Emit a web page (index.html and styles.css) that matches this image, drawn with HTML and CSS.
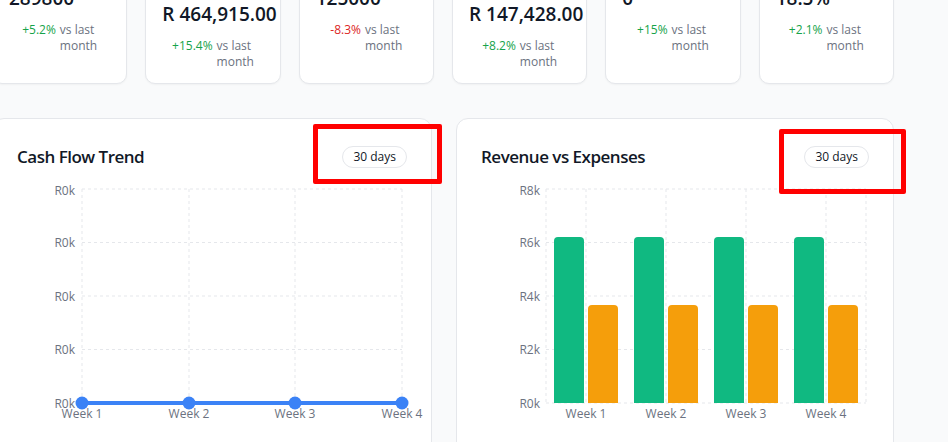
FILE: index.html
```html
<!DOCTYPE html>
<html lang="en">
<head>
<meta charset="utf-8">
<title>Dashboard</title>
<link rel="stylesheet" href="styles.css">
</head>
<body>
<main class="page">
  <section class="kpi-grid">
    <div class="kpi-card">
      <div class="kpi-label">Total Units</div>
      <div class="kpi-value">289800</div>
      <div class="kpi-delta"><span class="delta up">+5.2%</span><span class="delta-note"><span class="nw">vs last</span> month</span></div>
    </div>
    <div class="kpi-card">
      <div class="kpi-label">Total Revenue This Period</div>
      <div class="kpi-value">R 464,915.00</div>
      <div class="kpi-delta"><span class="delta up">+15.4%</span><span class="delta-note"><span class="nw">vs last</span> month</span></div>
    </div>
    <div class="kpi-card">
      <div class="kpi-label">Transactions</div>
      <div class="kpi-value">125000</div>
      <div class="kpi-delta"><span class="delta down">-8.3%</span><span class="delta-note"><span class="nw">vs last</span> month</span></div>
    </div>
    <div class="kpi-card">
      <div class="kpi-label">Total Expenses This Period</div>
      <div class="kpi-value">R 147,428.00</div>
      <div class="kpi-delta"><span class="delta up">+8.2%</span><span class="delta-note"><span class="nw">vs last</span> month</span></div>
    </div>
    <div class="kpi-card">
      <div class="kpi-label">Overdue</div>
      <div class="kpi-value">0</div>
      <div class="kpi-delta"><span class="delta up">+15%</span><span class="delta-note"><span class="nw">vs last</span> month</span></div>
    </div>
    <div class="kpi-card">
      <div class="kpi-label">Margin</div>
      <div class="kpi-value">18.5%</div>
      <div class="kpi-delta"><span class="delta up">+2.1%</span><span class="delta-note"><span class="nw">vs last</span> month</span></div>
    </div>
  </section>

  <section class="chart-grid">
    <div class="chart-card">
      <div class="chart-head">
        <h3 class="chart-title">Cash Flow Trend</h3>
        <span class="badge">30 days</span>
      </div>
      <svg class="chart" width="389" height="260">
        <g class="grid">
          <line x1="65" y1="3" x2="385" y2="3"/>
          <line x1="65" y1="56.5" x2="385" y2="56.5"/>
          <line x1="65" y1="110" x2="385" y2="110"/>
          <line x1="65" y1="163.5" x2="385" y2="163.5"/>
          <line x1="65" y1="217" x2="385" y2="217"/>
          <line x1="65" y1="3" x2="65" y2="217"/>
          <line x1="172" y1="3" x2="172" y2="217"/>
          <line x1="278" y1="3" x2="278" y2="217"/>
          <line x1="385" y1="3" x2="385" y2="217"/>
        </g>
        <g class="axis-y">
          <text x="58" y="9">R0k</text>
          <text x="58" y="61">R0k</text>
          <text x="58" y="114.5">R0k</text>
          <text x="58" y="168">R0k</text>
          <text x="58" y="221.5">R0k</text>
        </g>
        <g class="axis-x">
          <text x="65" y="232">Week 1</text>
          <text x="172" y="232">Week 2</text>
          <text x="278" y="232">Week 3</text>
          <text x="385" y="232">Week 4</text>
        </g>
        <line class="trend" x1="65" y1="217" x2="385" y2="217"/>
        <g class="dots">
          <circle cx="65" cy="217" r="6.5"/>
          <circle cx="172" cy="217" r="6.5"/>
          <circle cx="278" cy="217" r="6.5"/>
          <circle cx="385" cy="217" r="6.5"/>
        </g>
      </svg>
    </div>

    <div class="chart-card">
      <div class="chart-head">
        <h3 class="chart-title">Revenue vs Expenses</h3>
        <span class="badge">30 days</span>
      </div>
      <svg class="chart" width="389" height="260">
        <g class="grid">
          <line x1="65" y1="3" x2="385" y2="3"/>
          <line x1="65" y1="56.5" x2="385" y2="56.5"/>
          <line x1="65" y1="110" x2="385" y2="110"/>
          <line x1="65" y1="163.5" x2="385" y2="163.5"/>
          <line x1="65" y1="217" x2="385" y2="217"/>
          <line x1="65" y1="3" x2="65" y2="217"/>
          <line x1="105" y1="3" x2="105" y2="217"/>
          <line x1="185" y1="3" x2="185" y2="217"/>
          <line x1="265" y1="3" x2="265" y2="217"/>
          <line x1="345" y1="3" x2="345" y2="217"/>
          <line x1="385" y1="3" x2="385" y2="217"/>
        </g>
        <g class="axis-y">
          <text x="59" y="9">R8k</text>
          <text x="59" y="61">R6k</text>
          <text x="59" y="114.5">R4k</text>
          <text x="59" y="168">R2k</text>
          <text x="59" y="221.5">R0k</text>
        </g>
        <g class="bars-rev">
          <path d="M73 217V55a4 4 0 0 1 4-4h22a4 4 0 0 1 4 4V217Z"/>
          <path d="M153 217V55a4 4 0 0 1 4-4h22a4 4 0 0 1 4 4V217Z"/>
          <path d="M233 217V55a4 4 0 0 1 4-4h22a4 4 0 0 1 4 4V217Z"/>
          <path d="M313 217V55a4 4 0 0 1 4-4h22a4 4 0 0 1 4 4V217Z"/>
        </g>
        <g class="bars-exp">
          <path d="M107 217V123a4 4 0 0 1 4-4h22a4 4 0 0 1 4 4V217Z"/>
          <path d="M187 217V123a4 4 0 0 1 4-4h22a4 4 0 0 1 4 4V217Z"/>
          <path d="M267 217V123a4 4 0 0 1 4-4h22a4 4 0 0 1 4 4V217Z"/>
          <path d="M347 217V123a4 4 0 0 1 4-4h22a4 4 0 0 1 4 4V217Z"/>
        </g>
        <g class="axis-x">
          <text x="105" y="232">Week 1</text>
          <text x="185" y="232">Week 2</text>
          <text x="265" y="232">Week 3</text>
          <text x="345" y="232">Week 4</text>
        </g>
      </svg>
    </div>
  </section>
</main>

<div class="highlight highlight-left"></div>
<div class="highlight highlight-right"></div>
</body>
</html>
```

FILE: styles.css
```css
* { box-sizing: border-box; }

html, body {
  margin: 0;
  padding: 0;
  background: #f9fafb;
  font-family: "Open Sans", "Noto Sans", sans-serif;
  color: #111827;
  overflow: hidden;
}

.page {
  width: 902px;
  margin: -52px 0 0 -8px;
}

.kpi-grid {
  display: grid;
  grid-template-columns: repeat(6, minmax(0, 1fr));
  gap: 18px;
}

.kpi-card {
  background: #fff;
  border: 1px solid #e5e7eb;
  border-radius: 10px;
  box-shadow: 0 1px 2px rgba(0, 0, 0, 0.04);
  padding: 15px 16px 13px;
  min-width: 0;
}

.kpi-label {
  font-size: 12px;
  line-height: 16px;
  color: #6b7280;
  margin-bottom: 4px;
}

.kpi-value {
  font-size: 19px;
  line-height: 28px;
  font-weight: 600;
  white-space: nowrap;
}

.kpi-delta {
  display: flex;
  justify-content: center;
  align-items: flex-start;
  gap: 4px;
  margin-top: 10px;
  font-size: 12px;
  line-height: 16px;
}

.delta { font-weight: 500; }
.delta.up { color: #16a34a; }
.delta.down { color: #dc2626; }

.delta-note {
  color: #6b7280;
  width: min-content;
}

.nw { white-space: nowrap; }

.chart-grid {
  display: grid;
  grid-template-columns: 440px minmax(0, 1fr);
  gap: 24px;
  margin-top: 34px;
}

.chart-card {
  background: #fff;
  border: 1px solid #e5e7eb;
  border-radius: 12px;
  padding: 24px;
  height: 360px;
}

.chart-head {
  display: flex;
  justify-content: space-between;
  align-items: center;
  height: 28px;
  margin-bottom: 15px;
}

.chart-title {
  margin: 0;
  font-size: 17px;
  line-height: 28px;
  font-weight: 600;
  letter-spacing: -0.5px;
}

.badge {
  display: inline-block;
  font-size: 12px;
  line-height: 16px;
  font-weight: 500;
  padding: 2px 10px;
  border: 1px solid #e5e7eb;
  border-radius: 9999px;
  color: #111827;
  background: #fff;
}

.chart {
  display: block;
  overflow: visible;
  font-family: "Open Sans", "Noto Sans", sans-serif;
}

.grid line {
  stroke: #e5e7eb;
  stroke-width: 1;
  stroke-dasharray: 3 3;
}

.axis-y text {
  font-size: 12px;
  fill: #6b7280;
  text-anchor: end;
}

.axis-x text {
  font-size: 12px;
  fill: #6b7280;
  text-anchor: middle;
}

.trend {
  stroke: #3b82f6;
  stroke-width: 4;
}

.dots circle { fill: #3b82f6; }

.bars-rev path { fill: #10b981; }
.bars-exp path { fill: #f59e0b; }

.highlight {
  position: absolute;
  border: 5px solid #ff0000;
  border-radius: 2px;
}

.highlight-left {
  left: 313px;
  top: 124px;
  width: 129px;
  height: 60px;
}

.highlight-right {
  left: 779px;
  top: 129px;
  width: 127px;
  height: 65px;
}
```
